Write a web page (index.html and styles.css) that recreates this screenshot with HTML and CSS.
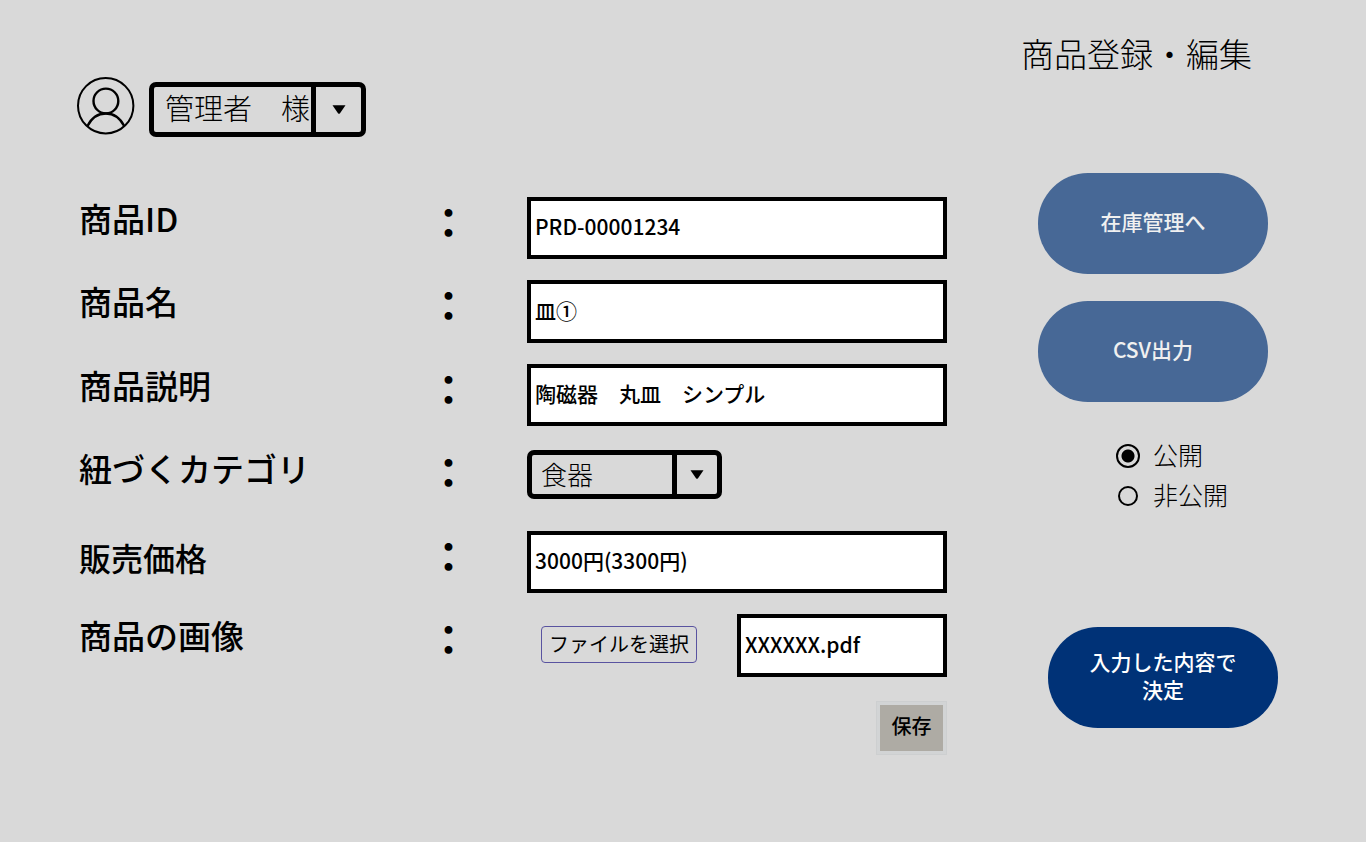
FILE: index.html
```html
<!DOCTYPE html>
<html lang="ja">
<head>
<meta charset="utf-8">
<meta name="viewport" content="width=device-width, initial-scale=1">
<title>商品登録・編集</title>
<link rel="stylesheet" href="styles.css">
</head>
<body>
<header class="header">
  <div class="user">
    <svg class="avatar" viewBox="0 0 58 58" fill="none" stroke="#000" aria-hidden="true">
      <circle cx="28.700" cy="28.700" r="27.700" stroke-width="2"/>
      <circle cx="28.900" cy="24" r="12.400" stroke-width="2.400"/>
      <path d="M10.500 49C14.500 41 21 36.500 28.900 36.500S43 41 47.200 49" stroke-width="2.400"/>
    </svg>
    <div class="select select-user">
      <select aria-label="ユーザー"><option>管理者　様</option></select>
      <span class="select-arrow"><svg viewBox="0 0 14 9" aria-hidden="true"><path d="M.5.3h13L8 8.200q-1 1-2 0Z"/></svg></span>
    </div>
  </div>
  <h1 class="title">商品登録・編集</h1>
</header>
<main class="main">
  <form class="form" id="product">
    <div class="row">
      <label class="label" for="pid">商品ID</label><span class="colon">：</span>
      <input class="input" id="pid" type="text" value="PRD-00001234">
    </div>
    <div class="row">
      <label class="label" for="pname">商品名</label><span class="colon">：</span>
      <input class="input" id="pname" type="text" value="皿①">
    </div>
    <div class="row">
      <label class="label" for="pdesc">商品説明</label><span class="colon">：</span>
      <input class="input" id="pdesc" type="text" value="陶磁器　丸皿　シンプル">
    </div>
    <div class="row">
      <label class="label" for="pcat">紐づくカテゴリ</label><span class="colon">：</span>
      <div class="select select-category">
        <select id="pcat"><option>食器</option></select>
        <span class="select-arrow"><svg viewBox="0 0 14 9" aria-hidden="true"><path d="M.5.3h13L8 8.200q-1 1-2 0Z"/></svg></span>
      </div>
    </div>
    <div class="row">
      <label class="label label-price" for="price">販売価格</label><span class="colon">：</span>
      <input class="input" id="price" type="text" value="3000円(3300円)">
    </div>
    <div class="row">
      <label class="label" for="pimg">商品の画像</label><span class="colon">：</span>
      <div class="file">
        <button class="file-button" type="button">ファイルを選択</button>
        <input class="input file-name" id="pimg" type="text" value="XXXXXX.pdf">
      </div>
    </div>
    <button class="save" type="button">保存</button>
  </form>
  <aside class="side">
    <button class="pill" type="button">在庫管理へ</button>
    <button class="pill" type="button">CSV出力</button>
    <div class="radios" role="radiogroup" aria-label="公開設定">
      <label class="radio"><input type="radio" name="visibility" form="product" checked><span>公開</span></label>
      <label class="radio"><input type="radio" name="visibility" form="product"><span>非公開</span></label>
    </div>
    <button class="pill pill-submit" type="submit" form="product">入力した内容で<br>決定</button>
  </aside>
</main>
</body>
</html>
```
FILE: styles.css
```css
*, *::before, *::after { box-sizing: border-box; }

body {
  margin: 0;
  background: #d9d9d9;
  color: #000;
  font-family: "Noto Sans CJK JP", sans-serif;
}

button, input, select { font: inherit; color: inherit; margin: 0; }
button, select { cursor: pointer; }

.header {
  display: flex;
  justify-content: space-between;
  align-items: flex-start;
  padding: 29px 114px 0 77px;
}

.title {
  margin: 0;
  font-size: 33px;
  line-height: 48px;
  font-weight: 300;
}

.user {
  display: flex;
  align-items: flex-end;
  gap: 14px;
  padding-top: 48px;
}

.avatar { width: 58px; height: 58px; margin-bottom: 2px; }

.select { position: relative; }

.select select {
  display: block;
  width: 100%;
  height: 100%;
  appearance: none;
  border: 5px solid #000;
  border-radius: 7px;
  background: transparent;
  font-weight: 300;
}

.select-arrow {
  position: absolute;
  top: 0;
  right: 0;
  bottom: 0;
  display: flex;
  align-items: center;
  justify-content: center;
  border-left: 5px solid #000;
  padding-right: 5px;
  pointer-events: none;
}

.select-arrow svg { width: 14px; height: 9px; }

.select-user { width: 217px; height: 55px; }
.select-user select { font-size: 29px; line-height: 36px; padding: 0 0 5px 11px; }
.select-user .select-arrow { width: 55px; }

.select-category { width: 195px; height: 49px; margin-top: 3px; }
.select-category select { font-size: 26px; padding: 0 0 2px 9px; }
.select-category .select-arrow { width: 50px; }

.main {
  display: grid;
  grid-template-columns: minmax(0, 870fr) minmax(230px, 240fr);
  column-gap: 91px;
  padding: 36px 88px 40px 77px;
}

.form {
  display: flex;
  flex-direction: column;
  gap: 21px;
  padding-top: 24px;
}

.row {
  display: grid;
  grid-template-columns: minmax(0, 351fr) 99px minmax(0, 420fr);
  min-height: 62px;
}

.row:nth-child(even) { min-height: 63px; }

.label {
  padding-left: 2px;
  font-size: 33px;
  line-height: 42px;
  font-weight: 500;
}

.label-price { padding-top: 5px; font-size: 32px; }

.colon {
  font-size: 41px;
  line-height: 46px;
  font-weight: 700;
}

.input {
  width: 100%;
  min-width: 0;
  border: 4px solid #000;
  border-radius: 0;
  background: #fff;
  padding: 0 4px 4px;
  font-size: 21px;
  font-weight: 500;
}

.file {
  display: flex;
  justify-content: space-between;
  align-items: stretch;
  padding-left: 14px;
}

.file-button {
  align-self: center;
  height: 37px;
  margin-bottom: 2px;
  padding: 0 7px 2px;
  border: 1px solid #5953a0;
  border-radius: 4px;
  background: transparent;
  font-size: 20px;
  line-height: 30px;
  white-space: nowrap;
}

.file-name { width: 210px; }

.save {
  align-self: flex-end;
  width: 71px;
  height: 54px;
  margin-top: 3px;
  padding: 0 0 6px;
  border: 1px solid #cdcfd0;
  box-shadow: inset 0 0 0 3px #d2d4d5;
  background: #aeaba4;
  font-size: 20px;
  font-weight: 500;
}

.side {
  display: flex;
  flex-direction: column;
  align-items: flex-start;
  gap: 27px;
}

.pill {
  width: 230px;
  min-height: 101px;
  padding: 0 0 5px;
  border: 0;
  border-radius: 50px;
  background: #476896;
  color: #f0f0f0;
  font-size: 21px;
  line-height: 28px;
  font-weight: 500;
}

.pill-submit {
  align-self: flex-end;
  margin-top: 84px;
  background: #003277;
  color: #fff;
}

.radios { padding: 7px 0 0 78px; }

.radio {
  display: flex;
  align-items: center;
  gap: 13px;
  font-size: 25px;
  line-height: 40px;
  font-weight: 300;
}

.radio span { margin-top: -2px; margin-bottom: 2px; }

.radio input {
  appearance: none;
  width: 20px;
  height: 20px;
  margin: 0 2px;
  border: 2px solid #000;
  border-radius: 50%;
}

.radio input:checked {
  width: 24px;
  height: 24px;
  margin: 0;
  background: radial-gradient(circle, #000 6px, transparent 7px);
}
```
